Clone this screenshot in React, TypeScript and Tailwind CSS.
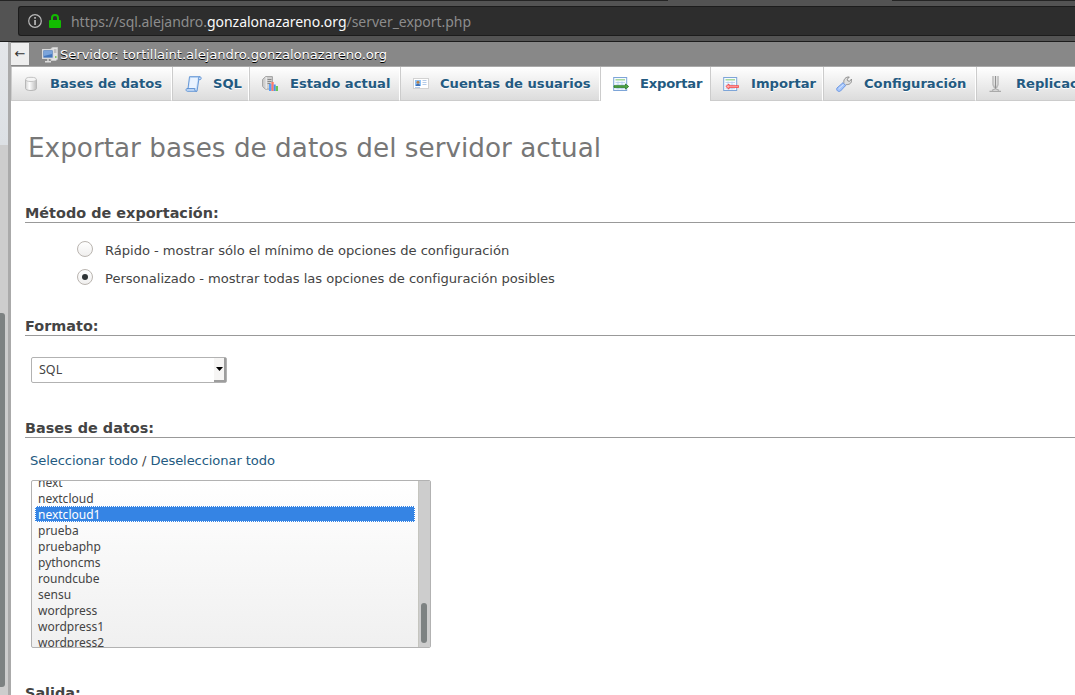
import React from "react";

const DatabaseIcon = () => (
  <svg width="16" height="16" viewBox="0 0 16 16">
    <defs>
      <linearGradient id="cyl" x1="0" x2="1" y1="0" y2="0">
        <stop offset="0" stopColor="#d2d2d2" />
        <stop offset=".35" stopColor="#fdfdfd" />
        <stop offset="1" stopColor="#bcbcbc" />
      </linearGradient>
    </defs>
    <path d="M1.500 3.500v9c0 1.200 2.400 2 5.500 2s5.500-.8 5.500-2v-9z" fill="url(#cyl)" stroke="#b8b8b8" />
    <ellipse cx="7" cy="3.400" rx="5.300" ry="2.100" fill="#f5f5f5" stroke="#c4c4c4" />
  </svg>
);

const ScriptIcon = () => (
  <svg width="18" height="16" viewBox="0 0 18 16">
    <path d="M4.500.7h10.300c1.800 0 1.800 3 .2 3h-1.200L12 15.300H2.300C.8 15.300.5 12.600 2 12.600h1z" fill="#c6ddf9" stroke="#6798d6" />
    <path d="M5.500 2h7.300L11 12H4z" fill="#eaf3ff" />
    <path d="M13.500 3.700c-.2-1.700.3-3 1.500-3M2 12.600h7.800c-.5 1.200.3 2.700 1.700 2.700" fill="none" stroke="#5c8fd0" />
  </svg>
);

const StatusIcon = () => (
  <svg width="16" height="16" viewBox="0 0 16 16">
    <path d="M.6 3.500 3.600.6h6.800v12.500H3.400L.6 10.500z" fill="#d0d0d0" stroke="#a0a0a0" />
    <path d="M4.200 1v12" stroke="#f4f4f4" />
    <path d="M5.500 3.500h4m-4 2h4m-4 2h3" stroke="#888" />
    <path d="M7 8h2.500v7H7z" fill="#5ba0f7" />
    <path d="M9.500 6h2.200v9H9.500z" fill="#ff7768" />
    <path d="M11.700 8.500h2v6.500h-2z" fill="#4a90f0" />
    <path d="M13.700 10H16v5h-2.300z" fill="#68c657" />
  </svg>
);

const CardIcon = () => (
  <svg width="16" height="16" viewBox="0 0 16 16">
    <rect x=".5" y="2.500" width="15" height="10" fill="#fff" stroke="#d2d2d2" />
    <rect x="2" y="4" width="6" height="6" fill="#8dc1f5" />
    <circle cx="5" cy="6.200" r="1.500" fill="#b9824a" />
    <path d="M2.800 10c0-3 4.400-3 4.400 0z" fill="#3d6fb5" />
    <path d="M9.500 4.500h4m-4 2h4m-4 2h4m-11.500 3h5" stroke="#b4cbe8" />
  </svg>
);

const TransferIcon = ({ incoming }: { incoming?: boolean }) => (
  <svg width="16" height="16" viewBox="0 0 16 16">
    <rect x=".7" y="1.500" width="13" height="13" fill="#f7fbff" stroke="#7da5d8" />
    <path d="M2.500 3.800h9.500" stroke="#9bd38b" strokeWidth="1.300" />
    <path d="M2.500 6.500h9.500M2.500 9h9.500M2.500 12.700h9.500M5 5.500v8M9 5.500v8" stroke="#b2cdee" strokeWidth=".8" />
    {incoming ? (
      <path d="M2.800 10.500 6 8v1.700h9.700v1.700H6v1.700z" fill="#ffb0b0" stroke="#f53838" strokeWidth=".8" />
    ) : (
      <path d="M15.700 10.500 12.500 8v1.700H1v1.700h11.500v1.700z" fill="#55a84a" stroke="#267a20" strokeWidth=".8" />
    )}
  </svg>
);

const WrenchIcon = () => (
  <svg width="16" height="16" viewBox="0 0 16 16">
    <path d="M7.800 6.500c-.3-3 1.700-5.800 5.500-5.500l-2 2.200.5 1.700 1.800.4L15.500 3c.8 3.500-1.800 6-5 5.500L9.300 9.600 7 7.500z" fill="#dedede" stroke="#8e8e8e" />
    <path d="m1 12 6-5.300 2.700 2.700L4.500 15c-2 1.300-4.800-.7-3.500-3z" fill="#a5c5fb" stroke="#6d98e2" />
    <path d="m2.700 12.800 4.800-4.300" stroke="#d7e7ff" />
  </svg>
);

const ReplicationIcon = () => (
  <svg width="16" height="16" viewBox="0 0 16 16">
    <path d="M4 0v8.500L5.500 12M9 0v8.500L7.500 12" fill="none" stroke="#bbb" strokeWidth="1.500" />
    <path d="M6.500 0v13" stroke="#909090" strokeWidth="1.300" />
    <path d="M.5 15.300h11.500M3 14.300l3.500-1.500L10 14.300" fill="none" stroke="#aaa" strokeWidth="1.200" />
  </svg>
);

const ServerIcon = () => (
  <svg width="16" height="16" viewBox="0 0 16 16">
    <path d="M9 1.500 11 .5h4.500V12L14 13.500H9z" fill="#e3e3e3" stroke="#c8c8c8" />
    <path d="M11.500 3h3m-3 2h3" stroke="#999" />
    <path d="M13 9h1.500v2H13z" fill="#8ac765" />
    <rect x=".7" y="2.700" width="10.600" height="8.600" fill="#4377bd" stroke="#dedede" strokeWidth="1.300" />
    <path d="M2 4h8v3L2 9z" fill="#7ba4da" />
    <path d="M6 12v2.300M3 14.700h6" stroke="#ddd" strokeWidth="1.400" fill="none" />
  </svg>
);

const tabs = [
  { label: "Bases de datos", icon: <DatabaseIcon />, width: "w-[161px]", text: "ml-[10px]" },
  { label: "SQL", icon: <ScriptIcon />, width: "w-[77px]", text: "ml-[10px]" },
  { label: "Estado actual", icon: <StatusIcon />, width: "w-[151px]", text: "ml-[12px]" },
  { label: "Cuentas de usuarios", icon: <CardIcon />, width: "w-[200px]", text: "ml-[11px]" },
  { label: "Exportar", icon: <TransferIcon />, width: "w-[110px]", text: "ml-[11px] tracking-[-0.2px]", active: true },
  { label: "Importar", icon: <TransferIcon incoming />, width: "w-[113px]", text: "ml-[12px]" },
  { label: "Configuración", icon: <WrenchIcon />, width: "w-[153px]", text: "ml-[12px]" },
  { label: "Replicación", icon: <ReplicationIcon />, width: "w-[150px]", text: "ml-[11px]" },
];

const databases = [
  "next", "nextcloud", "nextcloud1", "prueba", "pruebaphp", "pythoncms",
  "roundcube", "sensu", "wordpress", "wordpress1", "wordpress2",
];

const AddressBar = () => (
  <header className="flex h-[42px] shrink-0 flex-col border-b border-[#1c1c1c] bg-[#535353]">
    <div className="flex h-px justify-between">
      <div className="w-[668px] bg-[#242424]" />
      <div className="w-[183px] bg-[#242424]" />
    </div>
    <div className="mt-[5px] ml-[18px] flex h-[30px] items-center rounded-l-[3px] border border-r-0 border-[#1c1c1c] bg-[#2d2d2d] font-['Noto_Sans',sans-serif] text-[14px]">
      <svg className="ml-[9px]" width="14" height="14" viewBox="0 0 14 14">
        <circle cx="7" cy="7" r="6.300" fill="none" stroke="#b9b9b9" strokeWidth="1.200" />
        <path d="M6.200 3h1.700v1.700H6.200zm0 3h1.700v5H6.200z" fill="#b9b9b9" />
      </svg>
      <svg className="ml-[7px]" width="12" height="14" viewBox="0 0 12 14">
        <path d="M3 7V4a3 3 0 0 1 6 0v3" fill="none" stroke="#12bc00" strokeWidth="2" />
        <rect x="0" y="6" width="12" height="8" rx="1" fill="#12bc00" />
      </svg>
      <span className="ml-[10px] tracking-[-0.035px] whitespace-nowrap text-[#8c8c8c]">
        https://sql.alejandro.<span className="text-[#f9f9fa]">gonzalonazareno.org</span>/server_export.php
      </span>
    </div>
  </header>
);

const SectionTitle = ({ children }: { children: React.ReactNode }) => (
  <h3 className="h-[19px] border-b border-[#999] text-[14.400px] leading-[18px] font-bold tracking-[0.020px] text-[#444]">{children}</h3>
);

const Radio = ({ label, checked }: { label: string; checked?: boolean }) => (
  <label className="flex h-[28px] items-start">
    <span className="flex size-4 items-center justify-center rounded-full border border-[#bab5b0] bg-linear-to-b from-white to-[#f0efee]">
      {checked && <span className="size-[6px] rounded-full bg-[#2e3436]" />}
    </span>
    <span className="ml-3 pt-px leading-[17px] tracking-[-0.040px]">{label}</span>
  </label>
);

export default function App() {
  return (
    <div className="flex h-[695px] w-[1075px] flex-col overflow-hidden bg-white font-['DejaVu_Sans',sans-serif] text-[13.120px] text-[#444]">
      <AddressBar />
      <div className="flex min-h-0 flex-1">
        <aside className="flex w-[11px] shrink-0 flex-col border-r-[3px] border-[#aaa] bg-[#cdcdcd]">
          <div className="h-[103px] bg-linear-to-b from-[#e4e6e9] to-[#dce0e4]" />
          <div className="mt-[168px] h-[374px] w-[5px] rounded-r-[3px] bg-[#7d8282]" />
        </aside>
        <main className="flex w-[1064px] shrink-0 flex-col">
          <div className="flex h-[25px] shrink-0 items-center border-b border-[#aaa] bg-[#888]">
            <span className="flex h-[22px] w-[18px] items-center justify-center bg-[#eee] text-[13px] text-[#333]">←</span>
            <span className="mt-px ml-[13px]"><ServerIcon /></span>
            <span className="mt-[2px] ml-[2px] tracking-[-0.050px] whitespace-nowrap text-white [text-shadow:0_1px_0_#000]">
              Servidor: tortillaint.alejandro.gonzalonazareno.org
            </span>
          </div>
          <nav className="flex h-[34px] w-full shrink-0 overflow-hidden">
            {tabs.map((tab) => (
              <div
                key={tab.label}
                className={`${tab.width} ${tab.active ? "bg-white pb-px" : "border-b border-b-[#ccc] bg-linear-to-b from-white to-[#dcdcdc]"} flex shrink-0 items-center border-r border-l border-r-white border-l-[#ccc] pl-3 whitespace-nowrap`}
              >
                {tab.icon}
                <span className={`${tab.text} font-bold text-[#235a81] [text-shadow:0_1px_0_#fff]`}>{tab.label}</span>
              </div>
            ))}
          </nav>
          <div className="flex flex-col pl-[14px]">
            <h2 className="mt-[29px] ml-[3px] h-[36px] text-[26.240px] leading-[36px] tracking-[0.020px] whitespace-nowrap text-[#777]">
              Exportar bases de datos del servidor actual
            </h2>
            <section className="mt-[38px]">
              <SectionTitle>Método de exportación:</SectionTitle>
              <div className="mt-[18px] ml-[52px]">
                <Radio label="Rápido - mostrar sólo el mínimo de opciones de configuración" />
                <Radio label="Personalizado - mostrar todas las opciones de configuración posibles" checked />
              </div>
            </section>
            <section className="mt-[20px]">
              <SectionTitle>Formato:</SectionTitle>
              <div className="mt-[21px] ml-[6px] flex h-[26px] w-[196px] items-stretch rounded-[2px] border border-[#b2b2b2] bg-white font-['Noto_Sans',sans-serif] text-[12.500px]">
                <span className="flex flex-1 items-center pt-px pl-[7px]">SQL</span>
                <span className="flex w-[12px] items-center justify-center border-r-2 border-b-2 border-[#9d9d9d] bg-[#f6f5f4]">
                  <svg width="7" height="4" viewBox="0 0 7 4"><path d="M0 0h7L3.500 4z" /></svg>
                </span>
              </div>
            </section>
            <section className="mt-[36px]">
              <SectionTitle>Bases de datos:</SectionTitle>
              <p className="mt-[14px] ml-[5px] h-[18px] leading-[18px] tracking-[-0.100px]">
                <a className="text-[#235a81]">Seleccionar todo</a> / <a className="text-[#235a81]">Deseleccionar todo</a>
              </p>
              <div className="mt-[10px] ml-[6px] flex h-[168px] w-[400px] overflow-hidden rounded-[2px] border border-[#b2b2b2] bg-linear-to-b from-white to-[#f0f0f0]">
                <ul className="-mt-[7px] flex h-[173px] flex-1 flex-col px-[3px] font-['Noto_Sans',sans-serif] text-[12px] leading-[18px]">
                  {databases.map((name) => (
                    <li
                      key={name}
                      className={`h-4 shrink-0 ${name === "nextcloud1" ? "border border-dotted border-white bg-[#3584e4] pl-[2px] leading-[16px] text-white" : "pl-[3px]"}`}
                    >
                      {name}
                    </li>
                  ))}
                </ul>
                <div className="flex w-[12px] flex-col border-l border-[#c5c5bf] bg-[#cdcdcd] pt-[122px] pl-[2px]">
                  <div className="h-[40px] w-[6px] rounded-full bg-[#7d8282]" />
                </div>
              </div>
            </section>
            <section className="mt-[36px]">
              <SectionTitle>Salida:</SectionTitle>
            </section>
          </div>
        </main>
      </div>
    </div>
  );
}
